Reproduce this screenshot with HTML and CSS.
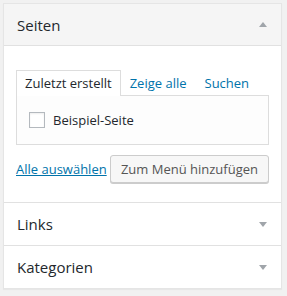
FILE: index.html
```html
<!DOCTYPE html>
<html lang="de">
<head>
    <meta charset="UTF-8">
    <title>Menü</title>
    <link rel="stylesheet" href="styles.css">
</head>
<body>
    <div class="accordion">
        <div class="section open">
            <div class="section-title">
                <span>Seiten</span>
                <span class="arrow up"></span>
            </div>
            <div class="section-content">
                <ul class="tabs">
                    <li class="tab active">Zuletzt erstellt</li>
                    <li class="tab">Zeige alle</li>
                    <li class="tab">Suchen</li>
                </ul>
                <div class="tabs-panel">
                    <label class="item"><span class="checkbox"></span>Beispiel-Seite</label>
                </div>
                <div class="actions">
                    <a class="select-all" href="#">Alle auswählen</a>
                    <button class="button">Zum Menü hinzufügen</button>
                </div>
            </div>
        </div>
        <div class="section">
            <div class="section-title">
                <span>Links</span>
                <span class="arrow down"></span>
            </div>
        </div>
        <div class="section">
            <div class="section-title">
                <span>Kategorien</span>
                <span class="arrow down"></span>
            </div>
        </div>
    </div>
</body>
</html>
```

FILE: styles.css
```css
body {
    margin: 0;
    padding: 3px 5px 7px 3px;
    background-color: #f1f1f1;
    font-family: "Open Sans", "Liberation Sans", sans-serif;
    font-size: 13px;
    color: #23282d;
}

.accordion {
    width: 277px;
    background-color: #ffffff;
    border: 1px solid #e5e5e5;
    box-shadow: 0 1px 1px rgba(0, 0, 0, 0.04);
}

.section + .section {
    border-top: 1px solid #e1e1e1;
}

.section-title {
    display: flex;
    justify-content: space-between;
    align-items: center;
    height: 42px;
    padding: 0 14px 0 13px;
    font-size: 15px;
}

.open .section-title {
    height: 41px;
    background-color: #f5f5f5;
    border-bottom: 1px solid #e1e1e1;
}

.arrow {
    width: 0;
    height: 0;
    border-left: 4px solid transparent;
    border-right: 4px solid transparent;
}

.arrow.up {
    border-bottom: 5px solid #a0a5aa;
}

.arrow.down {
    border-top: 5px solid #a0a5aa;
}

.section-content {
    padding: 24px 12px 19px 12px;
}

.tabs {
    display: flex;
    margin: 0;
    padding: 0;
    list-style: none;
}

.tab {
    padding: 3px 8px 4px 8px;
    line-height: 18px;
    color: #0073aa;
    border: 1px solid transparent;
    border-bottom: none;
    margin-bottom: -1px;
}

.tab.active {
    color: #23282d;
    background-color: #ffffff;
    border-color: #dddddd;
    position: relative;
}

.tabs-panel {
    height: 48px;
    border: 1px solid #dddddd;
    background-color: #fdfdfd;
    padding: 0 12px;
    display: flex;
    align-items: center;
}

.item {
    display: flex;
    align-items: center;
    gap: 8px;
}

.checkbox {
    width: 14px;
    height: 14px;
    border: 1px solid #b4b9be;
    background-color: #ffffff;
    box-shadow: inset 0 1px 2px rgba(0, 0, 0, 0.07);
}

.actions {
    display: flex;
    justify-content: space-between;
    align-items: center;
    margin-top: 10px;
}

.select-all {
    color: #0073aa;
    text-decoration: underline;
}

.button {
    height: 28px;
    padding: 0 10px 1px 10px;
    font-family: inherit;
    font-size: 13px;
    color: #555555;
    background-color: #f7f7f7;
    border: 1px solid #cccccc;
    border-radius: 3px;
    box-shadow: 0 1px 0 #cccccc;
}
```
